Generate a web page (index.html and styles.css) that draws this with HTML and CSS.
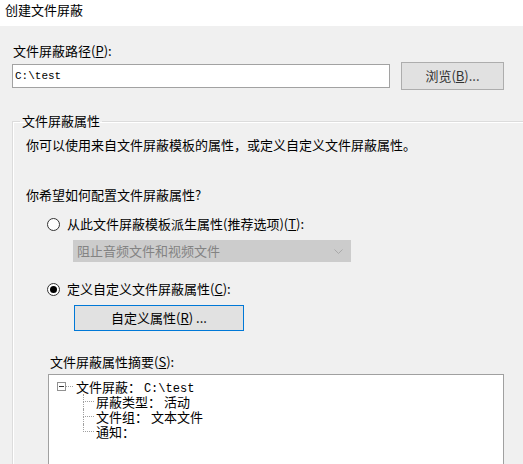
FILE: index.html
```html
<!DOCTYPE html>
<html lang="zh-CN">
<head>
<meta charset="utf-8">
<title>创建文件屏蔽</title>
<link rel="stylesheet" href="styles.css">
</head>
<body>
<div class="titlebar">创建文件屏蔽</div>
<div class="main">
  <div class="label path-label">文件屏蔽路径(<u>P</u>):</div>
  <div class="path-row">
    <div class="input">C:\test</div>
    <div class="btn browse">浏览(<u>B</u>)...</div>
  </div>
  <fieldset class="group">
    <legend>文件屏蔽属性</legend>
    <div class="line">你可以使用来自文件屏蔽模板的属性，或定义自定义文件屏蔽属性。</div>
    <div class="line q">你希望如何配置文件屏蔽属性?</div>
    <div class="radio-row r1"><span class="radio"></span><span>从此文件屏蔽模板派生属性(推荐选项)(<u>T</u>):</span></div>
    <div class="select">
      <span>阻止音频文件和视频文件</span>
      <svg class="chev" width="9" height="5" viewBox="0 0 9 5"><path d="M0.5 0.5 L4.5 4.5 L8.5 0.5" fill="none" stroke="#a9a9a9" stroke-width="1"/></svg>
    </div>
    <div class="radio-row r2"><span class="radio checked"></span><span>定义自定义文件屏蔽属性(<u>C</u>):</span></div>
    <div class="btn custom">自定义属性(<u>R</u>) ...</div>
    <div class="label summary-label">文件屏蔽属性摘要(<u>S</u>):</div>
    <div class="tree">
      <div class="root"><span class="minus"></span><span class="hdash"></span><span class="tx">文件屏蔽： <span class="mono">C:\test</span></span></div>
      <div class="children">
        <div class="child"><span class="conn"><span class="top"></span><span class="bot"></span></span><span class="tx">屏蔽类型： 活动</span></div>
        <div class="child"><span class="conn"><span class="top"></span><span class="bot"></span></span><span class="tx">文件组： 文本文件</span></div>
        <div class="child last"><span class="conn"><span class="top"></span><span class="bot"></span></span><span class="tx">通知：</span></div>
      </div>
    </div>
  </fieldset>
</div>
</body>
</html>
```
FILE: styles.css
```css
html, body {
  margin: 0;
  padding: 0;
}
body {
  width: 523px;
  height: 464px;
  overflow: hidden;
  background: #f0f0f0;
  font-family: "Noto Sans CJK SC", "Microsoft YaHei", sans-serif;
  font-size: 13px;
  line-height: 16px;
  color: #000;
}
u {
  text-decoration: underline;
  text-underline-offset: 1px;
}
.titlebar {
  background: #fff;
  height: 26px;
  box-sizing: border-box;
  padding: 2px 0 0 5px;
}
.main {
  padding: 17px 0 0 12px;
}
.path-label {
  margin-left: 1px;
}
.path-row {
  display: flex;
  align-items: center;
  height: 28px;
  margin-top: 3px;
}
.input {
  width: 378px;
  height: 24px;
  box-sizing: border-box;
  border: 1px solid #a2a2a2;
  background: #fff;
  font-family: "Liberation Mono", monospace;
  font-size: 11px;
  line-height: 22px;
  padding-left: 2px;
}
.btn {
  box-sizing: border-box;
  background: #e1e1e1;
  border: 1px solid #adadad;
  text-align: center;
}
.browse {
  margin-left: 11px;
  width: 103px;
  height: 28px;
  line-height: 26px;
  color: #333;
}
.group {
  margin: 23px 0 0 0;
  padding: 0 0 0 13px;
  border: 1px solid #dcdcdc;
  border-right: none;
  border-bottom: none;
  box-shadow: inset 1px 1px 0 #fff;
}
.group legend {
  margin-left: -6px;
  padding: 0 2px;
  line-height: 16px;
}
.group .line:first-of-type {
  margin-top: 8px;
}
.q {
  margin-top: 34px;
}
.radio-row {
  display: flex;
  align-items: center;
  margin-left: 21px;
  height: 16px;
}
.r1 {
  margin-top: 13px;
}
.r2 {
  margin-top: 19px;
}
.radio {
  width: 13px;
  height: 13px;
  box-sizing: border-box;
  border: 1px solid #333;
  border-radius: 50%;
  background: #fff;
  margin-right: 7px;
  display: flex;
  align-items: center;
  justify-content: center;
  flex: none;
}
.radio.checked::after {
  content: "";
  width: 7px;
  height: 7px;
  border-radius: 50%;
  background: #000;
}
.select {
  margin: 8px 0 0 47px;
  width: 278px;
  height: 22px;
  box-sizing: border-box;
  background: #cccccc;
  border: 1px solid #cccccc;
  color: #838383;
  display: flex;
  align-items: center;
  justify-content: space-between;
  padding: 0 7px 0 3px;
}
.chev {
  display: block;
}
.custom {
  margin: 8px 0 0 48px;
  width: 170px;
  height: 26px;
  line-height: 24px;
  border-color: #0078d7;
}
.summary-label {
  margin: 23px 0 0 24px;
}
.tree {
  margin: 4px 0 0 22px;
  width: 456px;
  height: 90px;
  box-sizing: border-box;
  background: #fff;
  border: 1px solid #a0a0a0;
  border-bottom: none;
  padding-top: 4px;
  line-height: 15px;
}
.tx {
  line-height: 15px;
  height: 15px;
  display: block;
}
.root {
  display: flex;
  align-items: center;
  padding-left: 8px;
  height: 15px;
}
.minus {
  width: 9px;
  height: 9px;
  box-sizing: border-box;
  border: 1px solid #919191;
  display: flex;
  align-items: center;
  justify-content: center;
  flex: none;
}
.minus::after {
  content: "";
  width: 5px;
  height: 1px;
  background: #333;
}
.hdash {
  width: 7px;
  border-top: 1px dotted #a0a0a0;
  margin-right: 3px;
}
.mono {
  font-family: "Liberation Mono", monospace;
  font-size: 12px;
}
.children {
  margin-left: 34px;
}
.child {
  display: flex;
  height: 15px;
}
.conn {
  width: 11px;
  margin-right: 2px;
  display: flex;
  flex-direction: column;
  flex: none;
}
.conn .top {
  height: 7px;
  border-left: 1px dotted #a0a0a0;
  border-bottom: 1px dotted #a0a0a0;
}
.conn .bot {
  flex: 1;
  border-left: 1px dotted #a0a0a0;
}
.child.last .conn .bot {
  border-left: none;
}
```
